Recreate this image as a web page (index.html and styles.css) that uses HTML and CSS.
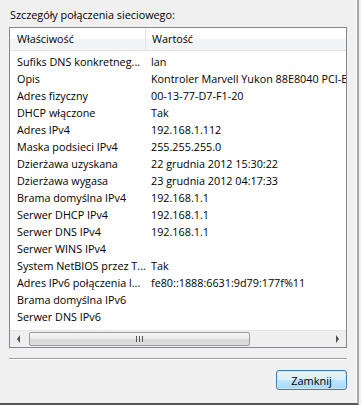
FILE: index.html
```
<!DOCTYPE html>
<html lang="pl">
<head>
    <meta charset="UTF-8">
    <title>Szczegóły połączenia sieciowego</title>
    <link rel="stylesheet" href="styles.css">
</head>
<body>
<div class="dialog">
    <div class="caption">Szczegóły połączenia sieciowego:</div>
    <div class="listbox">
        <div class="list-head">
            <div class="col-name">Właściwość</div>
            <div class="col-value">Wartość</div>
        </div>
        <div class="list-body">
            <div class="row"><div class="col-name">Sufiks DNS konkretneg...</div><div class="col-value">lan</div></div>
            <div class="row"><div class="col-name">Opis</div><div class="col-value">Kontroler Marvell Yukon 88E8040 PCI-E Fast Ethernet</div></div>
            <div class="row"><div class="col-name">Adres fizyczny</div><div class="col-value">00-13-77-D7-F1-20</div></div>
            <div class="row"><div class="col-name">DHCP włączone</div><div class="col-value">Tak</div></div>
            <div class="row"><div class="col-name">Adres IPv4</div><div class="col-value">192.168.1.112</div></div>
            <div class="row"><div class="col-name">Maska podsieci IPv4</div><div class="col-value">255.255.255.0</div></div>
            <div class="row"><div class="col-name">Dzierżawa uzyskana</div><div class="col-value">22 grudnia 2012 15:30:22</div></div>
            <div class="row"><div class="col-name">Dzierżawa wygasa</div><div class="col-value">23 grudnia 2012 04:17:33</div></div>
            <div class="row"><div class="col-name">Brama domyślna IPv4</div><div class="col-value">192.168.1.1</div></div>
            <div class="row"><div class="col-name">Serwer DHCP IPv4</div><div class="col-value">192.168.1.1</div></div>
            <div class="row"><div class="col-name">Serwer DNS IPv4</div><div class="col-value">192.168.1.1</div></div>
            <div class="row"><div class="col-name">Serwer WINS IPv4</div><div class="col-value"></div></div>
            <div class="row"><div class="col-name">System NetBIOS przez T...</div><div class="col-value">Tak</div></div>
            <div class="row"><div class="col-name">Adres IPv6 połączenia l...</div><div class="col-value">fe80::1888:6631:9d79:177f%11</div></div>
            <div class="row"><div class="col-name">Brama domyślna IPv6</div><div class="col-value"></div></div>
            <div class="row"><div class="col-name">Serwer DNS IPv6</div><div class="col-value"></div></div>
        </div>
        <div class="hbar">
            <div class="hbar-btn hbar-left"></div>
            <div class="hbar-track">
                <div class="hbar-knob"><span class="hbar-grip"></span></div>
            </div>
            <div class="hbar-btn hbar-right"></div>
        </div>
    </div>
    <div class="separator"></div>
    <div class="buttons">
        <button class="btn btn-default">Zamknij</button>
    </div>
</div>
</body>
</html>
```
FILE: styles.css
```
body {
    margin: 0;
    background-color: #f0f0f0;
    font-family: "Open Sans", "Liberation Sans", sans-serif;
    font-size: 10.8px;
    color: #000;
}
.dialog {
    width: 357px;
    height: 403px;
    border-right: 2px solid #a9a9a9;
    border-bottom: 2px solid #555;
    box-shadow: inset -1px 0 0 #fafafa;
}
.caption {
    padding: 6px 0 0 10px;
    height: 21px;
    line-height: 17px;
    white-space: nowrap;
}
.listbox {
    margin-left: 9px;
    width: 336px;
    height: 319px;
    border: 1px solid #828790;
    background-color: #fff;
    display: flex;
    flex-direction: column;
}
.list-head {
    display: flex;
    height: 22px;
    line-height: 22px;
    border-bottom: 1px solid #e5e5e5;
    background: linear-gradient(#fff 0%, #fff 50%, #f3f4f6 50%, #f3f4f6 100%);
    flex: none;
}
.list-head .col-name {
    border-right: 1px solid #e3e5e8;
}
.col-name {
    width: 128px;
    padding-left: 7px;
    flex-shrink: 0;
    white-space: nowrap;
}
.col-value {
    padding-left: 6px;
    white-space: nowrap;
    overflow: hidden;
    flex: 1;
}
.list-body {
    height: 277px;
    padding-top: 2px;
    overflow: hidden;
    flex: none;
}
.row {
    display: flex;
    height: 17px;
    line-height: 17px;
}
.hbar {
    height: 17px;
    flex: none;
    display: flex;
    align-items: center;
    background-color: #efefef;
    border-top: 1px solid #e6e6e6;
    box-sizing: border-box;
}
.hbar-btn {
    width: 17px;
    height: 16px;
    flex: none;
    display: flex;
    align-items: center;
    justify-content: center;
}
.hbar-left::before {
    content: "";
    display: block;
    border-top: 4px solid transparent;
    border-bottom: 4px solid transparent;
    border-right: 3px solid #4d4d4d;
}
.hbar-right::before {
    content: "";
    display: block;
    border-top: 4px solid transparent;
    border-bottom: 4px solid transparent;
    border-left: 3px solid #4d4d4d;
}
.hbar-track {
    flex: 1;
    height: 16px;
    display: flex;
    align-items: center;
}
.hbar-knob {
    width: 221px;
    height: 14px;
    margin-left: 2px;
    border: 1px solid #9c9c9c;
    border-radius: 2px;
    background: linear-gradient(#f6f6f6, #e9e9e9 50%, #d8d8d8 51%, #dedede);
    display: flex;
    align-items: center;
    justify-content: center;
    box-sizing: border-box;
}
.hbar-grip {
    width: 7px;
    height: 6px;
    background: repeating-linear-gradient(90deg, #555 0 1px, transparent 1px 3px);
}
.separator {
    margin: 10px 0 0 9px;
    width: 338px;
    border-top: 1px solid #a0a0a0;
    border-bottom: 1px solid #fff;
}
.buttons {
    display: flex;
    justify-content: flex-end;
    width: 347px;
    margin-top: 10px;
}
.btn {
    width: 71px;
    height: 20px;
    padding: 0;
    font-family: inherit;
    font-size: 11px;
    color: #000;
    border: 1px solid #3c7fb1;
    border-radius: 3px;
    box-shadow: inset 0 0 0 1px #c5e8fa;
    background: linear-gradient(#eaf6fd 0%, #d9f0fc 50%, #bee6fd 51%, #a7d9f5 100%);
}
```
